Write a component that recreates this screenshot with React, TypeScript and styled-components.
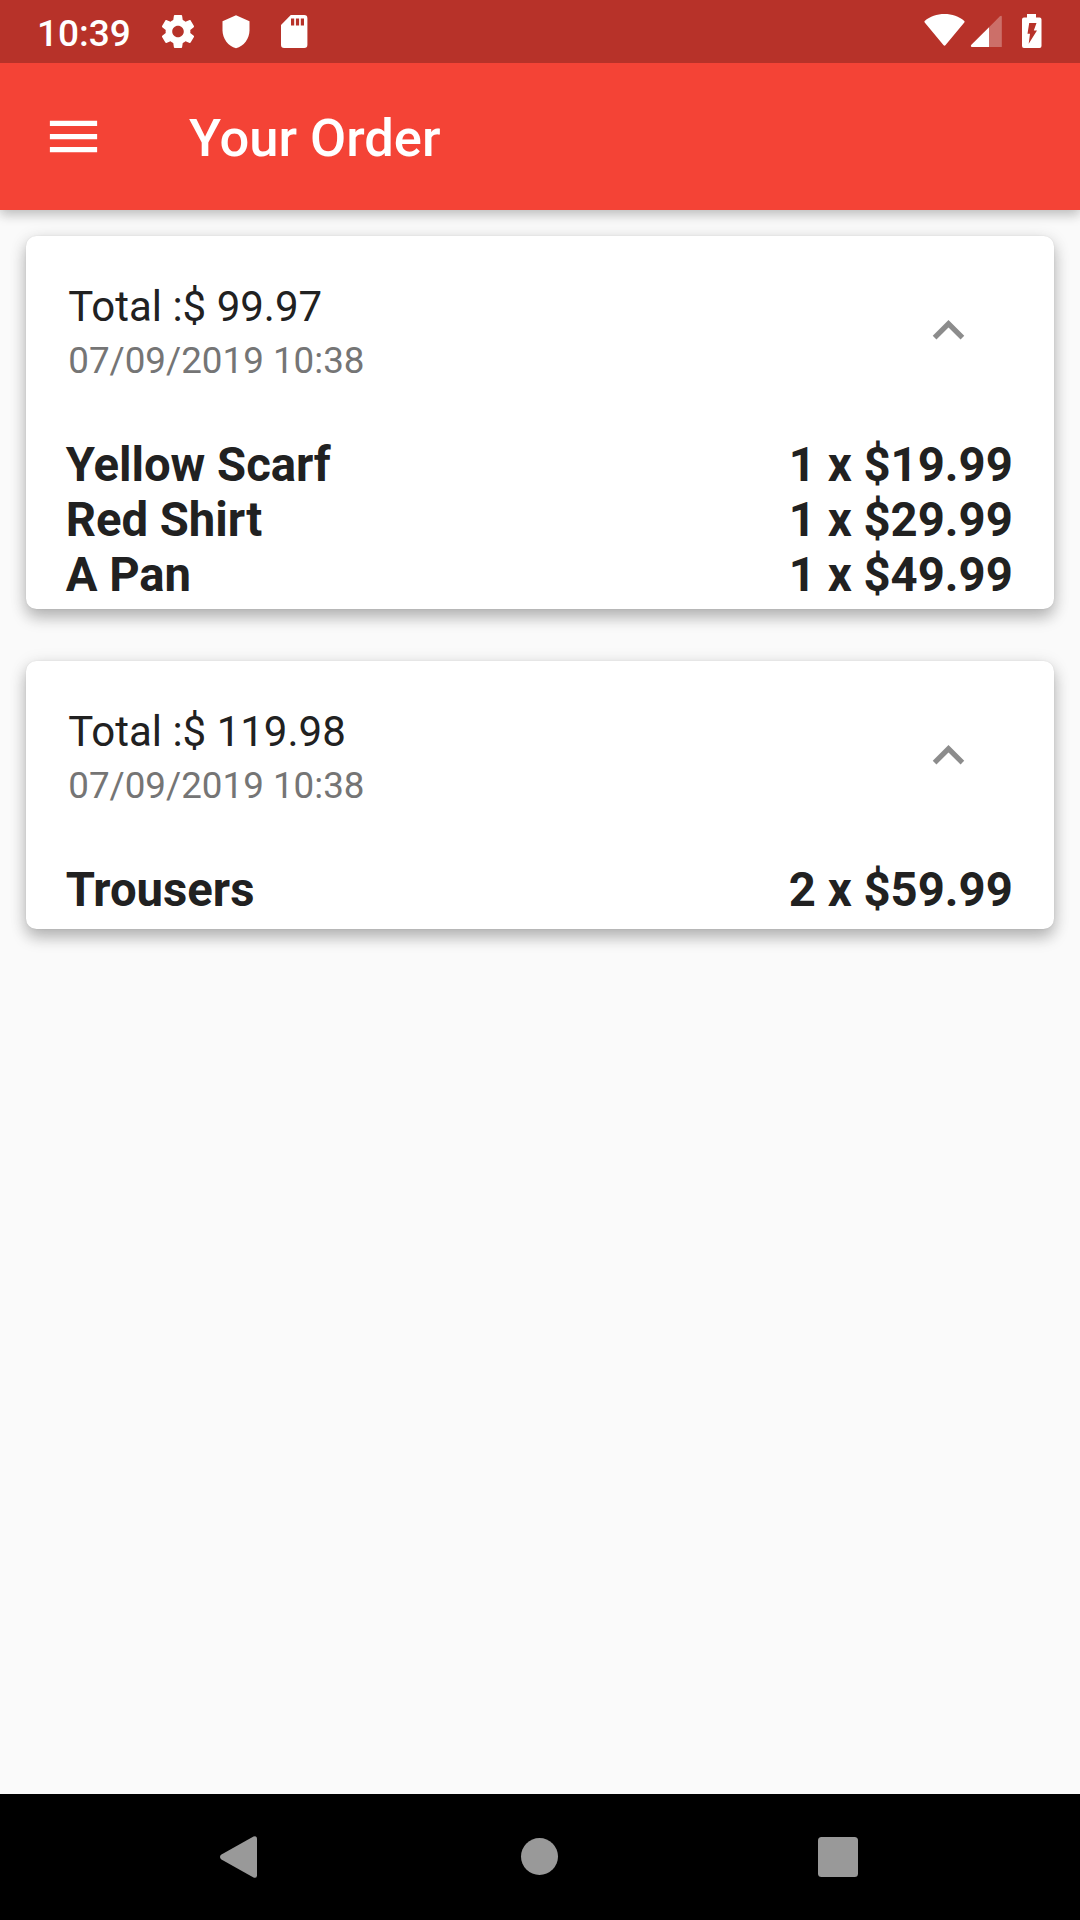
import React from "react";
import styled, { createGlobalStyle } from "styled-components";

const GlobalStyle = createGlobalStyle`
  *, *::before, *::after { box-sizing: border-box; }
  body { margin: 0; background: #fafafa; font-family: Roboto, "Liberation Sans", sans-serif; }
  svg { display: block; flex: none; }
`;

const Screen = styled.div`
  display: flex;
  flex-direction: column;
  width: 1080px;
  height: 1920px;
  overflow: hidden;
  background: #fafafa;
  color: #212121;
`;

const StatusBar = styled.div`
  position: relative;
  z-index: 1;
  display: flex;
  align-items: center;
  justify-content: space-between;
  flex: none;
  height: 63px;
  padding: 0 38px 0 37px;
  background: #b73229;
`;

const StatusGroup = styled.div`
  display: flex;
  align-items: center;
  height: 100%;
`;

const Clock = styled.span`
  width: 121px;
  padding-top: 5px;
  font-size: 37px;
  font-weight: 500;
  line-height: 44px;
  color: #fff;
`;

const AppBar = styled.header`
  display: flex;
  align-items: center;
  flex: none;
  height: 147px;
  padding: 0 42px;
  background: #f44336;
  box-shadow: 0 5px 11px rgba(0, 0, 0, 0.2), 0 1px 14px rgba(0, 0, 0, 0.08);
`;

const MenuButton = styled.button`
  width: 147px;
  padding: 0;
  border: 0;
  background: none;
`;

const Title = styled.h1`
  margin: 0;
  padding-top: 2px;
  font-size: 52.5px;
  font-weight: 500;
  line-height: 62px;
  color: #fff;
`;

const OrderList = styled.main`
  display: flex;
  flex-direction: column;
  flex: 1;
  gap: 52px;
  padding: 26px 26.25px;
`;

const OrderCard = styled.article`
  padding-bottom: 8px;
  border-radius: 10.5px;
  background: #fff;
  box-shadow: 0 9px 15px rgba(0, 0, 0, 0.22), 0 3px 18px rgba(0, 0, 0, 0.12),
    0 0 2px rgba(0, 0, 0, 0.08);
`;

const Summary = styled.div`
  display: flex;
  align-items: center;
  justify-content: space-between;
  height: 189px;
  padding: 0 42px;
`;

const Total = styled.div`
  padding-top: 4px;
  font-size: 42px;
  line-height: 50px;
`;

const PlacedAt = styled.div`
  padding-top: 7px;
  font-size: 36.75px;
  line-height: 44px;
  color: #757575;
`;

const ExpandButton = styled.button`
  display: flex;
  justify-content: center;
  width: 126px;
  padding: 0;
  border: 0;
  background: none;
`;

const Items = styled.ul<{ $count: number }>`
  height: ${(p) => Math.floor(p.$count * 52.5 + 18.5)}px;
  margin: 0;
  padding: 13px 41px 0 39.4px;
  list-style: none;
`;

const Item = styled.li`
  display: flex;
  justify-content: space-between;
  height: 55px;
  font-size: 47.25px;
  font-weight: 700;
  line-height: 55px;
`;

const NavBar = styled.nav`
  display: flex;
  align-items: center;
  justify-content: center;
  flex: none;
  height: 126px;
  background: #000;
`;

const NavButton = styled.button`
  display: flex;
  justify-content: center;
  width: 299px;
  padding: 0;
  border: 0;
  background: none;
`;

const orders = [
  {
    total: "99.97",
    placedAt: "07/09/2019 10:38",
    items: [
      { name: "Yellow Scarf", quantity: 1, price: "19.99" },
      { name: "Red Shirt", quantity: 1, price: "29.99" },
      { name: "A Pan", quantity: 1, price: "49.99" },
    ],
  },
  {
    total: "119.98",
    placedAt: "07/09/2019 10:38",
    items: [{ name: "Trousers", quantity: 2, price: "59.99" }],
  },
];

const NotificationIcons = () => (
  <svg width="160" height="63" viewBox="158 0 160 63" fill="#fff">
    <path
      transform="translate(158.2 11.7) scale(1.65)"
      d="M19.43 12.98c.04-.32.07-.64.07-.98s-.03-.66-.07-.98l2.11-1.65c.19-.15.24-.42.12-.64l-2-3.46c-.12-.22-.39-.3-.61-.22l-2.49 1c-.52-.4-1.08-.73-1.69-.98l-.38-2.65C14.46 2.18 14.25 2 14 2h-4c-.25 0-.46.18-.49.42l-.38 2.65c-.61.25-1.17.59-1.69.98l-2.49-1c-.23-.09-.49 0-.61.22l-2 3.46c-.13.22-.07.49.12.64l2.11 1.65c-.04.32-.07.65-.07.98s.03.66.07.98l-2.11 1.65c-.19.15-.24.42-.12.64l2 3.46c.12.22.39.3.61.22l2.49-1c.52.4 1.08.73 1.69.98l.38 2.65c.03.24.24.42.49.42h4c.25 0 .46-.18.49-.42l.38-2.65c.61-.25 1.17-.59 1.69-.98l2.49 1c.23.09.49 0 .61-.22l2-3.46c.12-.22.07-.49-.12-.64l-2.11-1.65zM12 15.5c-1.93 0-3.5-1.57-3.5-3.5s1.57-3.5 3.5-3.5 3.5 1.57 3.5 3.5-1.57 3.5-3.5 3.5z"
    />
    <path d="M236 15.3L249.5 21.2V30.2C249.5 38.6 243.8 46.2 236 48.2C228.2 46.2 222.5 38.6 222.5 30.2V21.2Z" />
    <path
      fillRule="evenodd"
      d="M290.8 15H304.2Q307.4 15 307.4 18.2V44.8Q307.4 48 304.2 48H284.2Q281 48 281 44.8V25ZM291 18.5V25.5H294.2V18.5ZM295.9 18.5V25.5H299.1V18.5ZM300.8 18.5V25.5H304V18.5Z"
    />
  </svg>
);

const SystemIcons = () => (
  <svg width="122" height="63" viewBox="920 0 122 63" fill="#fff">
    <path d="M944.5 14.1C936.9 14.1 930 16.7 924.7 20.9Q924 21.6 924.7 22.4L943.4 45.1Q944.5 46.2 945.6 45.1L964.3 22.4Q965 21.6 964.3 20.9C959 16.7 952.1 14.1 944.5 14.1Z" />
    <path
      opacity="0.3"
      d="M989 27.2L999.7 16.5Q1001.8 15 1001.8 17V47H989Z"
    />
    <path d="M989 27.2V47H972Q970 46.6 971.4 44.8Z" />
    <path
      fillRule="evenodd"
      d="M1027 14H1036V17.6H1039.6Q1041.5 17.6 1041.5 19.5V46Q1041.5 48 1039.6 48H1024Q1022 48 1022 46V19.5Q1022 17.6 1024 17.6H1027ZM1029.2 23L1027.5 33.7H1030L1028.7 43.8L1037 30.6H1033.8L1036.5 23Z"
    />
  </svg>
);

const MenuIcon = () => (
  <svg width="63" height="63" viewBox="0 0 24 24" fill="#fff">
    <path d="M3 18h18v-2H3v2zm0-5h18v-2H3v2zm0-7v2h18V6H3z" />
  </svg>
);

const ChevronUp = () => (
  <svg width="63" height="63" viewBox="0 0 24 24" fill="#8c8c8c">
    <path d="M12 8l-6 6 1.41 1.41L12 10.83l4.59 4.58L18 14z" />
  </svg>
);

export default function App() {
  return (
    <Screen>
      <GlobalStyle />
      <StatusBar>
        <StatusGroup>
          <Clock>10:39</Clock>
          <NotificationIcons />
        </StatusGroup>
        <SystemIcons />
      </StatusBar>
      <AppBar>
        <MenuButton aria-label="Menu">
          <MenuIcon />
        </MenuButton>
        <Title>Your Order</Title>
      </AppBar>
      <OrderList>
        {orders.map((order) => (
          <OrderCard key={order.total}>
            <Summary>
              <div>
                <Total>Total :$ {order.total}</Total>
                <PlacedAt>{order.placedAt}</PlacedAt>
              </div>
              <ExpandButton aria-label="Collapse">
                <ChevronUp />
              </ExpandButton>
            </Summary>
            <Items $count={order.items.length}>
              {order.items.map((item) => (
                <Item key={item.name}>
                  <span>{item.name}</span>
                  <span>
                    {item.quantity} x ${item.price}
                  </span>
                </Item>
              ))}
            </Items>
          </OrderCard>
        ))}
      </OrderList>
      <NavBar>
        <NavButton aria-label="Back">
          <svg width="42" height="42" viewBox="0 0 42 42" fill="#999">
            <path d="M1 18.8L33.5 0.6Q37 -0.7 37 2.8V39.2Q37 42.7 33.5 41.4L1 23.2Q-1 21 1 18.8Z" />
          </svg>
        </NavButton>
        <NavButton aria-label="Home">
          <svg width="42" height="42" viewBox="0 0 42 42" fill="#999">
            <circle cx="20.5" cy="20.5" r="18.5" />
          </svg>
        </NavButton>
        <NavButton aria-label="Recents">
          <svg width="42" height="42" viewBox="0 0 42 42" fill="#999">
            <rect x="0" y="1" width="40" height="40" rx="3.5" />
          </svg>
        </NavButton>
      </NavBar>
    </Screen>
  );
}
